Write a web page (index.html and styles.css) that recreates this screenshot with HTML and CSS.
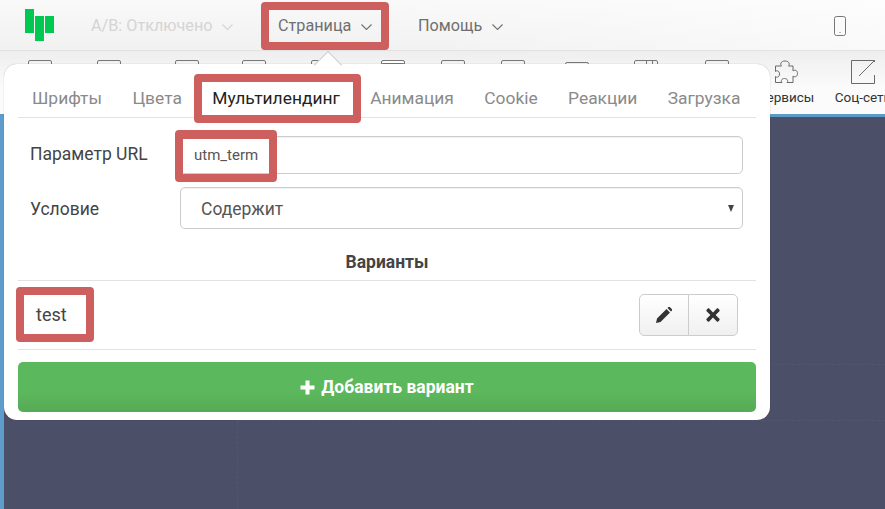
FILE: index.html
```html
<!DOCTYPE html>
<html lang="ru">
<head>
<meta charset="utf-8">
<title>Мультилендинг</title>
<link rel="stylesheet" href="styles.css">
</head>
<body>
<div class="app">
  <header class="topbar">
    <svg class="logo" width="29" height="32" viewBox="0 0 29 32"><path fill="#00c853" d="M0 0h9v24H0zM10 7h9v25h-9zM20 7h9v17h-9z"/></svg>
    <div class="menu menu-ab">A/B: Отключено<svg class="chev" width="11" height="6" viewBox="0 0 11 6"><path d="M.5.5l5 5 5-5"/></svg></div>
    <div class="menu menu-page">Страница<svg class="chev" width="11" height="6" viewBox="0 0 11 6"><path d="M.5.5l5 5 5-5"/></svg></div>
    <div class="menu menu-help">Помощь<svg class="chev" width="11" height="6" viewBox="0 0 11 6"><path d="M.5.5l5 5 5-5"/></svg></div>
    <svg class="phone" width="12" height="20" viewBox="0 0 12 20"><rect x=".5" y=".5" width="11" height="19" rx="2"/><path d="M5.500 16.500h1"/></svg>
  </header>
  <nav class="toolbar">
    <div class="tool"><span class="box"></span></div>
    <div class="tool"><span class="box"></span></div>
    <div class="tool"><span class="box"></span></div>
    <div class="tool"><span class="box"></span></div>
    <div class="tool"><span class="box"></span></div>
    <div class="tool"><span class="box box-dark"></span></div>
    <div class="tool"><span class="box"></span></div>
    <div class="tool"><span class="box"></span></div>
    <div class="tool"><span class="box box-low"></span></div>
    <div class="tool"><span class="box box-cols"></span></div>
    <div class="tool"><span class="box"></span></div>
    <div class="tool">
      <svg width="24" height="24" viewBox="0 0 24 24"><path d="M1.500 6H7.500C6 4.500 6.500 1 11 1s5 3.500 3.500 5H19V11c1.500-1.500 4.500-1 4.500 2.500S20.500 17.500 19 16V22.500H13c1.500-1.500.5-4-2.500-4S6.500 21 8 22.500H1.500V16.500c1.500 1.500 4 .5 4-2.500S3 10 1.500 11.500Z"/></svg>
      <span class="tool-label">Сервисы</span>
    </div>
    <div class="tool">
      <svg width="24" height="24" viewBox="0 0 24 24"><path d="M23.500 15v8.500H.5V.5h23V2M23.500.5L8 16"/></svg>
      <span class="tool-label">Соц-сети</span>
    </div>
  </nav>
  <main class="canvas">
    <div class="guide guide-a"></div>
    <div class="guide guide-b"></div>
  </main>

  <section class="popup">
    <span class="arrow"></span>
    <div class="tabs">
      <span class="tab">Шрифты</span>
      <span class="tab">Цвета</span>
      <span class="tab tab-active">Мультилендинг</span>
      <span class="tab">Анимация</span>
      <span class="tab">Cookie</span>
      <span class="tab">Реакции</span>
      <span class="tab">Загрузка</span>
    </div>
    <div class="form-row row-url">
      <label class="label">Параметр URL</label>
      <div class="input input-text">utm_term</div>
    </div>
    <div class="form-row row-cond">
      <label class="label">Условие</label>
      <div class="input input-select">Содержит<span class="caret"></span></div>
    </div>
    <h3 class="variants-title">Варианты</h3>
    <div class="variant">
      <span class="variant-name">test</span>
      <div class="btn-group">
        <button class="icon-btn"><svg width="16" height="16" viewBox="0 0 16 16"><path fill="#333" d="M0 16l1-4.500L10.500 2l3.500 3.500L4.500 15zM11.500 1l1-1c.5-.3 1-.3 1.300 0l2.200 2.200c.3.300.3.800 0 1.300l-1 1z"/></svg></button>
        <button class="icon-btn"><svg width="14" height="14" viewBox="0 0 14 14"><path fill="#333" d="M3.200.6L7 4.400 10.800.6c.4-.4 1-.4 1.400 0l1.200 1.200c.4.400.4 1 0 1.400L9.600 7l3.800 3.800c.4.400.4 1 0 1.400l-1.200 1.200c-.4.400-1 .4-1.400 0L7 9.600l-3.800 3.800c-.4.400-1 .4-1.400 0L.6 12.200c-.4-.4-.4-1 0-1.400L4.400 7 .6 3.200c-.4-.4-.4-1 0-1.400L1.800.6c.4-.4 1-.4 1.400 0z"/></svg></button>
      </div>
    </div>
    <button class="add-btn"><svg class="plus" width="15" height="15" viewBox="0 0 15 15"><path fill="#fff" d="M5.500.5h4v5h5v4h-5v5h-4v-5h-5v-4h5z"/></svg>Добавить вариант</button>
  </section>

  <span class="mark mark-page"></span>
  <span class="mark mark-tab"></span>
  <span class="mark mark-input"></span>
  <span class="mark mark-test"></span>
</div>
</body>
</html>
```

FILE: styles.css
```css
* { box-sizing: border-box; }
html, body { margin: 0; padding: 0; }
body { width: 885px; height: 509px; overflow: hidden; font-family: Roboto, "Liberation Sans", sans-serif; }
.app { position: relative; width: 885px; height: 509px; overflow: hidden; background: #4b4f68; display: flex; flex-direction: column; }

.topbar { height: 51px; flex: none; display: flex; align-items: center; background: linear-gradient(90deg, rgba(255,255,255,0) 40%, rgba(255,255,255,.6)), linear-gradient(#f9f9f9, #f1f1f1); border-bottom: 1px solid #e2e2e2; font-size: 16.200px; color: #6f6f6f; padding-left: 25px; }
.logo { flex: none; margin-right: 36px; }
.menu { display: flex; align-items: center; white-space: nowrap; padding-top: 1px; }
.menu-ab { color: #d4d4d4; width: 188px; padding-left: 1px; }
.menu-page { width: 140px; }
.menu-help { width: 416px; }
.chev { margin-left: 10px; margin-top: 2px; fill: none; stroke: currentColor; stroke-width: 1.1; }
.phone { fill: none; stroke: #777; stroke-width: 1; margin-top: 1px; }

.toolbar { height: 66px; flex: none; display: grid; grid-template-columns: 69px 78px 67px 69px 70px 60px 60px 64px 69px 71px 69px 77px 34px; align-items: start; background: linear-gradient(#eeeeee, #fbfbfb 60%); border-bottom: 3px solid #5b9bc8; padding: 9px 0 0 28px; }
.tool { width: 24px; display: flex; flex-direction: column; align-items: center; font-size: 13.500px; color: #333; white-space: nowrap; }
.tool svg { fill: none; stroke: #6a6a6a; stroke-width: 1; flex: none; }
.tool-label { margin-top: 5px; }
.box { width: 24px; height: 24px; border: 1px solid #777; border-radius: 2px; flex: none; }
.box-low { margin-top: 2px; }
.box-dark { box-shadow: inset 0 2px 0 #fff, inset 0 4px 0 #777; }
.box-cols { background: linear-gradient(90deg, transparent 50%, #777 50%, #777 54%, transparent 54%, transparent 76%, #777 76%, #777 80%, transparent 80%); }

.canvas { flex: 1; background: #4b4f68; border-left: 4px solid #5d9ccb; display: flex; flex-direction: column; }
.guide { margin-left: 233px; flex: none; }
.guide-a { margin-top: 247px; height: 57px; border-top: 1px dashed rgba(255,255,255,.04); border-bottom: 1px dashed rgba(255,255,255,.04); }
.guide-b { flex: 1; border-left: 1px dashed rgba(255,255,255,.04); }

.popup { position: absolute; left: 4px; top: 64px; width: 766px; height: 356px; background: #fff; border-radius: 13px; padding: 0 14px; display: flex; flex-direction: column; box-shadow: 0 0 1px rgba(0,0,0,.35); }
.arrow { position: absolute; left: 314px; top: -9px; width: 20px; height: 20px; background: #fff; transform: rotate(45deg); border-left: 1px solid #ccc; border-top: 1px solid #ccc; }

.tabs { display: flex; height: 54px; flex: none; border-bottom: 1px solid #e2e2e2; align-items: center; font-size: 17.400px; color: #8a8a8a; padding: 15px 0 0 14px; gap: 30.400px; white-space: nowrap; position: relative; }
.tab-active { color: #222; }

.form-row { display: flex; align-items: center; flex: none; font-size: 17.500px; color: #444; padding-left: 12px; }
.row-url { margin-top: 18px; }
.row-url .label { padding-bottom: 2px; }
.row-cond { margin-top: 13px; }
.row-cond .label { padding-top: 2px; }
.label { width: 150px; flex: none; }
.input { width: 563px; border: 1px solid #ccc; border-radius: 5px; display: flex; align-items: center; position: relative; background: #fff; box-shadow: inset 0 1px 1px rgba(0,0,0,.06); }
.input-text { font-size: 15px; color: #555; padding-left: 13px; height: 38px; }
.input-select { font-size: 17.500px; color: #555; padding: 2px 0 0 20px; height: 42px; }
.caret { position: absolute; right: 8px; top: 17px; width: 0; height: 0; border-left: 3.500px solid transparent; border-right: 3.500px solid transparent; border-top: 7px solid #444; }

.variants-title { margin: 0; height: 52px; flex: none; display: flex; align-items: center; justify-content: center; font-size: 17.500px; font-weight: 700; color: #444; padding-top: 15px; border-bottom: 1px solid #e2e2e2; }
.variant { height: 69px; flex: none; display: flex; align-items: center; justify-content: space-between; border-bottom: 1px solid #e2e2e2; padding: 0 18px; font-size: 18px; color: #444; }
.variant-name { padding-bottom: 2px; }
.btn-group { display: flex; }
.icon-btn { width: 50px; height: 42px; border: 1px solid #ccc; background: linear-gradient(#fff, #f0f0f0); display: flex; align-items: center; justify-content: center; padding: 0; border-radius: 5px 0 0 5px; }
.icon-btn + .icon-btn { margin-left: -1px; border-radius: 0 5px 5px 0; }

.add-btn { height: 50px; flex: none; margin-top: 12px; border: 0; border-radius: 5px; background: linear-gradient(#5cb85c 60%, #56aa56); color: #fff; font: 700 17.500px Roboto, "Liberation Sans", sans-serif; display: flex; align-items: center; justify-content: center; }
.plus { margin-right: 6px; }

.mark { position: absolute; border: 8px solid #cd5f5f; border-radius: 4px; }
.mark-page { left: 261px; top: 2px; width: 128px; height: 48px; }
.mark-tab { left: 194px; top: 74px; width: 167px; height: 49px; }
.mark-input { left: 175px; top: 130px; width: 102px; height: 52px; border-top-width: 9px; }
.mark-test { left: 16px; top: 287px; width: 78px; height: 55px; }
```
